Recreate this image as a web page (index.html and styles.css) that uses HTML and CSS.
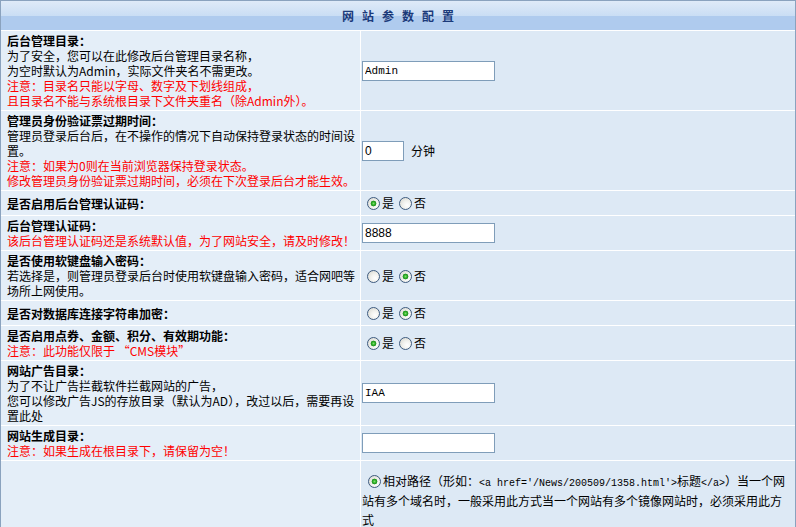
FILE: index.html
```html
<!DOCTYPE html>
<html lang="zh-CN">
<head>
  <meta charset="UTF-8">
  <title>网站参数配置</title>
  <link rel="stylesheet" href="styles.css">
</head>
<body>
  <table class="config">
    <tr>
      <th colspan="2" class="title">网站参数配置</th>
    </tr>
    <tr>
      <td class="label">
        <b>后台管理目录：</b><br>
        为了安全，您可以在此修改后台管理目录名称，<br>
        为空时默认为Admin，实际文件夹名不需更改。<br>
        <span class="warn">注意：目录名只能以字母、数字及下划线组成，<br>
        且目录名不能与系统根目录下文件夹重名（除Admin外）。</span>
      </td>
      <td class="field"><input type="text" class="text mono" value="Admin"></td>
    </tr>
    <tr>
      <td class="label">
        <b>管理员身份验证票过期时间：</b><br>
        管理员登录后台后，在不操作的情况下自动保持登录状态的时间设置。<br>
        <span class="warn">注意：如果为0则在当前浏览器保持登录状态。<br>
        修改管理员身份验证票过期时间，必须在下次登录后台才能生效。</span>
      </td>
      <td class="field"><input type="text" class="text short" value="0"><span class="unit">分钟</span></td>
    </tr>
    <tr>
      <td class="label"><b>是否启用后台管理认证码：</b></td>
      <td class="field"><label><input type="radio" name="checkcode" checked>是</label><label><input type="radio" name="checkcode">否</label></td>
    </tr>
    <tr>
      <td class="label">
        <b>后台管理认证码：</b><br>
        <span class="warn">该后台管理认证码还是系统默认值，为了网站安全，请及时修改！</span>
      </td>
      <td class="field"><input type="text" class="text" value="8888"></td>
    </tr>
    <tr>
      <td class="label">
        <b>是否使用软键盘输入密码：</b><br>
        若选择是，则管理员登录后台时使用软键盘输入密码，适合网吧等场所上网使用。
      </td>
      <td class="field"><label><input type="radio" name="softkey">是</label><label><input type="radio" name="softkey" checked>否</label></td>
    </tr>
    <tr>
      <td class="label"><b>是否对数据库连接字符串加密：</b></td>
      <td class="field"><label><input type="radio" name="encrypt">是</label><label><input type="radio" name="encrypt" checked>否</label></td>
    </tr>
    <tr>
      <td class="label">
        <b>是否启用点券、金额、积分、有效期功能：</b><br>
        <span class="warn">注意：此功能仅限于 “CMS模块”</span>
      </td>
      <td class="field"><label><input type="radio" name="points" checked>是</label><label><input type="radio" name="points">否</label></td>
    </tr>
    <tr>
      <td class="label">
        <b>网站广告目录：</b><br>
        为了不让广告拦截软件拦截网站的广告，<br>
        您可以修改广告JS的存放目录（默认为AD），改过以后，需要再设置此处
      </td>
      <td class="field"><input type="text" class="text mono" value="IAA"></td>
    </tr>
    <tr>
      <td class="label">
        <b>网站生成目录：</b><br>
        <span class="warn">注意：如果生成在根目录下，请保留为空！</span>
      </td>
      <td class="field"><input type="text" class="text" value=""></td>
    </tr>
    <tr>
      <td class="label"></td>
      <td class="field wide"><label><input type="radio" name="linkmode" checked>相对路径（形如：<code>&lt;a href='/News/200509/1358.html'&gt;</code>标题<code>&lt;/a&gt;</code>）</label>当一个网站有多个域名时，一般采用此方式当一个网站有多个镜像网站时，必须采用此方式</td>
    </tr>
  </table>
</body>
</html>
```

FILE: styles.css
```css
body {
  margin: 0;
  font-family: "Noto Sans CJK SC", sans-serif;
  font-size: 12px;
  line-height: 15px;
  color: #000;
  background: #fff;
}
.config {
  width: 796px;
  border: 1px solid #8aa2be;
  border-collapse: separate;
  border-spacing: 0;
}
.config th {
  height: 29px;
  padding: 0 0 0 8px;
  background: linear-gradient(#dfeaf8, #cadef4 50%, #afcbee 52%, #afcbee);
  color: #1b3a7a;
  font-weight: bold;
  letter-spacing: 8px;
  text-align: center;
}
.config td {
  border-top: 1px solid #fff;
  vertical-align: middle;
}
.label {
  width: 353px;
  padding: 2px 0 2px 6px;
  background: #e4eef8;
}
.field {
  border-left: 1px solid #fff;
  padding: 3px 6px 3px 1px;
  line-height: 18px;
  background: #dde9f5;
}
.warn {
  color: #f00;
}
.text {
  box-sizing: border-box;
  width: 133px;
  height: 20px;
  margin: 0;
  padding: 1px 2px;
  border: 1px solid #7f9db9;
  background: #fff;
  font-family: "Liberation Sans", sans-serif;
  font-size: 12px;
  vertical-align: middle;
}
.text.mono {
  font-family: "Liberation Mono", monospace;
  font-size: 11px;
}
.text.short {
  width: 42px;
}
.unit {
  margin-left: 7px;
  vertical-align: middle;
}

/* XP style radio buttons */
.field input[type=radio] {
  appearance: none;
  box-sizing: border-box;
  width: 13px;
  height: 13px;
  margin: 0 2px 0 5px;
  border: 1px solid #3e5b7f;
  border-radius: 50%;
  background: radial-gradient(circle at 65% 65%, #fff 0, #f2f2ee 40%, #d4d4cc 100%);
  vertical-align: -2px;
}
.field input[type=radio]:checked {
  background:
    radial-gradient(circle, #7fdc6e 0, #33b52a 1.5px, #1d8e1d 2.6px, transparent 3.2px),
    radial-gradient(circle at 65% 65%, #fff 0, #f2f2ee 40%, #d4d4cc 100%);
}
.field.wide {
  padding-top: 10px;
  padding-bottom: 4px;
  line-height: 19.5px;
}
.field.wide input[type=radio] {
  margin-left: 6px;
}
code {
  font-family: "Liberation Mono", monospace;
  font-size: 10px;
  line-height: 1;
}
```
